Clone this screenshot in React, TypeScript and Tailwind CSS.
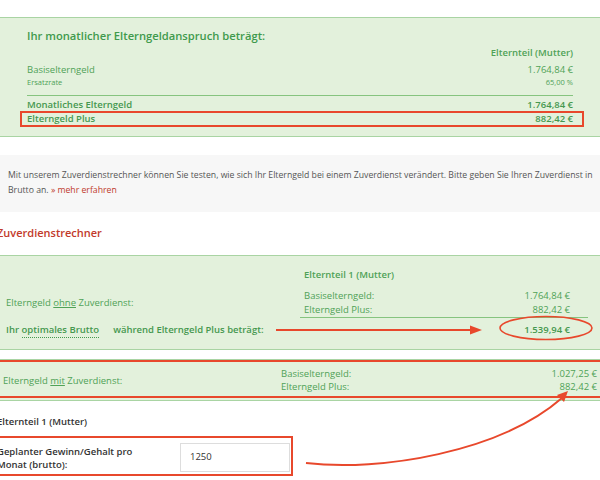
import React from 'react'

const green = 'text-[#4fa257]'

function Annotations() {
  return (
    <svg className="pointer-events-none absolute inset-0" width={600} height={480} viewBox="0 0 600 480">
      {/* straight arrow to optimal brutto */}
      <line x1={276} y1={330} x2={472} y2={330} stroke="#e8482c" strokeWidth={2} />
      <polygon points="470,325.5 482,330 470,334.5" fill="#e8482c" />
      {/* ellipse around value */}
      <ellipse cx={546} cy={328} rx={46} ry={11.5} fill="none" stroke="#e8482c" strokeWidth={1.6} />
      {/* curved arrow from input to Elterngeld Plus */}
      <path d="M306 463 C380 472 500 452 562 398" fill="none" stroke="#e8482c" strokeWidth={2} />
      <polygon points="568,391 557,395 564,402" fill="#e8482c" />
    </svg>
  )
}

export default function App() {
  return (
    <div
      className="relative w-[600px] h-[480px] overflow-hidden bg-white pt-[17px]"
      style={{ fontFamily: '"Open Sans", "Noto Sans", sans-serif' }}
    >
      {/* Result panel */}
      <div className={`border-y border-[#a9d4a3] bg-[#e3f1dc] px-[27px] pt-[9px] pb-[9px] ${green}`}>
        <div className="h-[18px] text-[11.2px] leading-[18px] font-semibold text-[#3f9a4c]">
          Ihr monatlicher Elterngeldanspruch beträgt:
        </div>
        <div className="mt-px h-[14px] text-right text-[9.5px] leading-[14px] font-semibold">Elternteil (Mutter)</div>
        <div className="mt-[3px] flex h-[14px] justify-between text-[9.5px] leading-[14px]">
          <span>Basiselterngeld</span>
          <span>1.764,84 €</span>
        </div>
        <div className="flex h-[11px] justify-between text-[7.5px] leading-[11px]">
          <span>Ersatzrate</span>
          <span>65,00 %</span>
        </div>
        <div className="mt-[7px] border-t border-[#86c47f]" />
        <div className="mt-[2px] flex h-[14px] justify-between text-[9.5px] leading-[14px] font-semibold text-[#45984f]">
          <span>Monatliches Elterngeld</span>
          <span>1.764,84 €</span>
        </div>
        <div className="-mt-px -ml-[7px] -mr-[11px] flex h-[16px] justify-between border-2 border-[#e8482c] pl-[5px] pr-[9px] text-[9.5px] leading-[12px] font-semibold text-[#45984f]">
          <span>Elterngeld Plus</span>
          <span>882,42 €</span>
        </div>
      </div>

      {/* Info text */}
      <div className="mt-[18px] bg-[#f7f7f7] pl-[8px] pr-[6px] pt-[13px] pb-[14px] text-[8.7px] leading-[15px] text-[#555]">
        Mit unserem Zuverdienstrechner können Sie testen, wie sich Ihr Elterngeld bei einem Zuverdienst verändert. Bitte
        geben Sie Ihren Zuverdienst in Brutto an. <span className="text-[#c0392b]">» mehr erfahren</span>
      </div>

      <h2 className="mt-[12px] -ml-[3px] h-[18px] text-[11px] leading-[18px] font-semibold text-[#c23a2b]">
        Zuverdienstrechner
      </h2>

      {/* Without extra income */}
      <div className={`mt-[13px] border-y border-[#a9d4a3] bg-[#e3f1dc] pt-[12px] pb-[12px] text-[9.5px] ${green}`}>
        <div className="flex">
          <div className="flex-1 pl-[6px]">
            <div className="mt-[21px] flex h-[28px] items-center leading-[14px]">
              <span>
                Elterngeld <span className="underline">ohne</span> Zuverdienst:
              </span>
            </div>
          </div>
          <div className="mr-[12px] w-[288px] border-b border-[#86c47f]">
            <div className="h-[14px] pl-[4px] leading-[14px] font-semibold">Elternteil 1 (Mutter)</div>
            <div className="mt-[7px] flex h-[14px] justify-between pl-[4px] pr-[18px] leading-[14px]">
              <span>Basiselterngeld:</span>
              <span>1.764,84 €</span>
            </div>
            <div className="flex h-[14px] justify-between pl-[4px] pr-[18px] leading-[14px]">
              <span>Elterngeld Plus:</span>
              <span>882,42 €</span>
            </div>
          </div>
        </div>
        <div className="mt-[5px] flex h-[14px] items-center justify-between pl-[6px] pr-[30px] leading-[14px] font-semibold text-[#45984f]">
          <span>
            Ihr <span className="border-b border-dotted border-[#45984f] pb-px">optimales Brutto</span>
            <span className="ml-[14px]">während Elterngeld Plus beträgt:</span>
          </span>
          <span>1.539,94 €</span>
        </div>
      </div>

      {/* With extra income */}
      <div className={`mt-[9px] border-y border-[#a9d4a3] bg-[#e3f1dc] pt-0 pb-[2px] text-[9.5px] ${green}`}>
        <div className="-mx-[4px] flex border-2 border-[#e8482c] pl-[5px] pr-[5px] pt-[5px] pb-[3px] leading-[13px]">
          <div className="flex w-[278px] items-center">
            <span>
              Elterngeld <span className="underline">mit</span> Zuverdienst:
            </span>
          </div>
          <div className="flex-1">
            <div className="flex h-[13px] justify-between">
              <span>Basiselterngeld:</span>
              <span>1.027,25 €</span>
            </div>
            <div className="flex h-[13px] justify-between">
              <span>Elterngeld Plus:</span>
              <span>882,42 €</span>
            </div>
          </div>
        </div>
      </div>

      {/* Input */}
      <div className="mt-[14px] -ml-[3px] h-[14px] text-[9.5px] leading-[14px] font-semibold text-[#333]">
        Elternteil 1 (Mutter)
      </div>
      <div className="mt-[7px] -ml-[6px] flex w-[299px] items-center justify-between border-2 border-[#e8482c] pl-[1px] pr-[1px] pt-[5px] pb-[2px]">
        <div className="w-[160px] text-[9.5px] leading-[13px] font-semibold text-[#333]">
          Geplanter Gewinn/Gehalt pro Monat (brutto):
        </div>
        <div className="flex h-[29px] w-[110px] items-center border border-[#ddd] bg-white pl-[9px] text-[9.5px] text-[#333]">
          1250
        </div>
      </div>

      <Annotations />
    </div>
  )
}
